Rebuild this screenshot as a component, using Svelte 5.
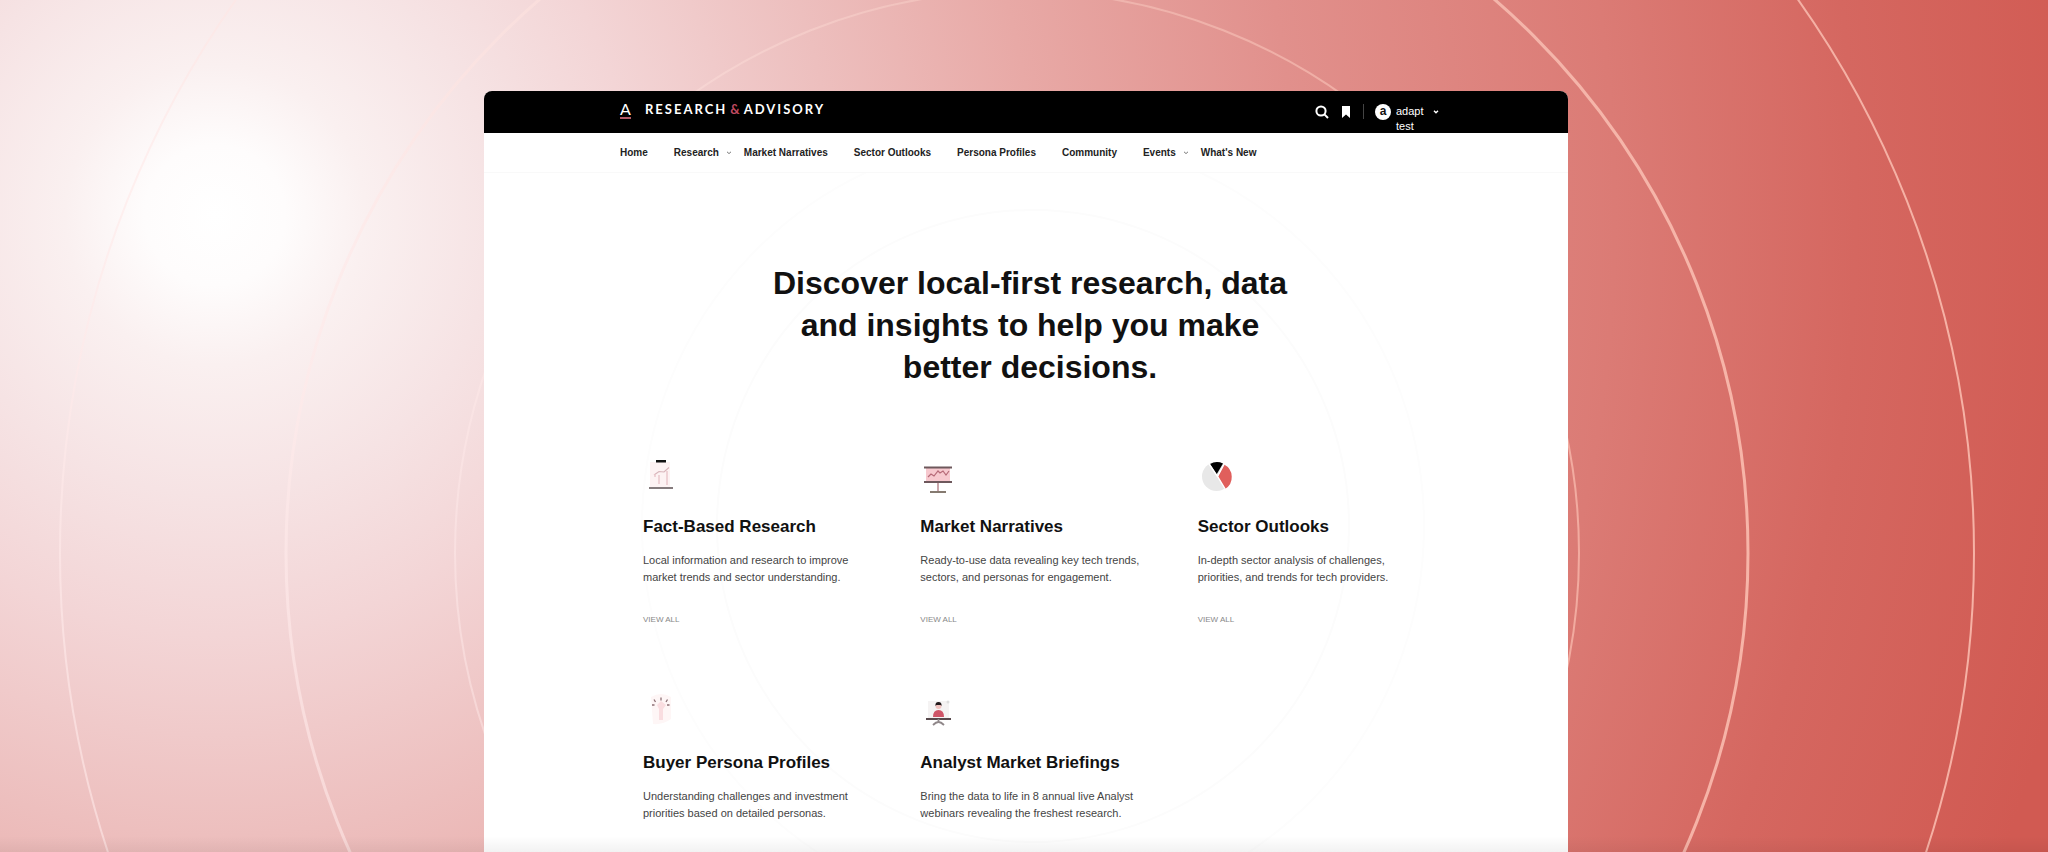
<script lang="ts">
	type NavItem = { label: string; menu?: boolean };
	type Feature = { icon: string; title: string; lines: string[]; link?: string };

	const navItems: NavItem[] = [
		{ label: 'Home' },
		{ label: 'Research', menu: true },
		{ label: 'Market Narratives' },
		{ label: 'Sector Outlooks' },
		{ label: 'Persona Profiles' },
		{ label: 'Community' },
		{ label: 'Events', menu: true },
		{ label: "What's New" }
	];

	const features: Feature[] = [
		{
			icon: 'report',
			title: 'Fact-Based Research',
			lines: ['Local information and research to improve', 'market trends and sector understanding.'],
			link: 'VIEW ALL'
		},
		{
			icon: 'board',
			title: 'Market Narratives',
			lines: ['Ready-to-use data revealing key tech trends,', 'sectors, and personas for engagement.'],
			link: 'VIEW ALL'
		},
		{
			icon: 'pie',
			title: 'Sector Outlooks',
			lines: ['In-depth sector analysis of challenges,', 'priorities, and trends for tech providers.'],
			link: 'VIEW ALL'
		},
		{
			icon: 'persona',
			title: 'Buyer Persona Profiles',
			lines: ['Understanding challenges and investment', 'priorities based on detailed personas.']
		},
		{
			icon: 'analyst',
			title: 'Analyst Market Briefings',
			lines: ['Bring the data to life in 8 annual live Analyst', 'webinars revealing the freshest research.']
		}
	];
</script>

<div class="stage">
	<svg class="rings" viewBox="0 0 2048 852" preserveAspectRatio="xMidYMid slice" aria-hidden="true">
		<defs>
			<linearGradient id="ring" x1="0" y1="0" x2="1" y2="0">
				<stop offset="0" stop-color="#ffeaea" stop-opacity="0.6" />
				<stop offset="0.5" stop-color="#fbd3c8" stop-opacity="0.5" />
				<stop offset="1" stop-color="#ffc6b8" stop-opacity="0.8" />
			</linearGradient>
		</defs>
		<g fill="none" stroke="url(#ring)">
			<circle cx="1017" cy="553" r="957" stroke-width="2" />
			<circle cx="1017" cy="553" r="731" stroke-width="3" />
			<circle cx="1017" cy="553" r="562" stroke-width="2" stroke-opacity="0.8" />
		</g>
	</svg>

	<div class="window">
		<header class="topbar">
			<a class="brand" href="#home">
				<span class="mark">A</span>
				<span class="wordmark">RESEARCH<em>&amp;</em>ADVISORY</span>
			</a>
			<div class="tools">
				<button type="button" class="tool" aria-label="Search">
					<svg width="14" height="14" viewBox="0 0 14 14" fill="none" stroke="#fff" stroke-width="2">
						<circle cx="6" cy="6" r="4.6" />
						<path d="M9.4 9.4 13 13" />
					</svg>
				</button>
				<button type="button" class="tool" aria-label="Bookmarks">
					<svg width="10" height="12" viewBox="0 0 10 12"><path d="M1 0h8v12L5 8.6 1 12z" fill="#fff" /></svg>
				</button>
				<span class="divider"></span>
				<button type="button" class="account">
					<span class="avatar">a</span>
					<span class="user">adapt<br />test</span>
					<svg width="6" height="4" viewBox="0 0 6 4" fill="none" stroke="#fff" stroke-width="1.4"><path d="M1 .8 3 2.8 5 .8" /></svg>
				</button>
			</div>
		</header>

		<nav class="nav">
			{#each navItems as item}
				<a href="#nav" class:has-menu={item.menu}>
					{item.label}
					{#if item.menu}
						<svg width="6" height="4" viewBox="0 0 6 4" fill="none" stroke="#777"><path d="M1 .8 3 2.6 5 .8" /></svg>
					{/if}
				</a>
			{/each}
		</nav>

		<main>
			<svg class="halo" viewBox="0 0 800 680" aria-hidden="true">
				<g fill="none" stroke="#fcfcfc" stroke-width="2">
					<circle cx="400" cy="353" r="316" />
					<circle cx="400" cy="353" r="391" stroke="#fdfdfd" />
				</g>
			</svg>

			<h1>Discover local-first research, data<br />and insights to help you make<br />better decisions.</h1>

			<div class="features">
				{#each features as feature}
					<article>
						<svg class="icon" width="40" height="40" viewBox="0 0 40 40" fill="none" aria-hidden="true">
							{#if feature.icon === 'report'}
								<path d="M7 7h20v26H7z" fill="#fdf2f3" />
								<path d="M13 5h10v2.500H13z" fill="#111" />
								<path d="M11 20l5-3.500 5 .5 5-4.500" stroke="#d8b4ba" stroke-width="1.200" />
								<path d="M16 20v9M24 16v14M12 19v3" stroke="#eac8cd" stroke-width="1.500" />
								<path d="M6 33h24" stroke="#857b7d" stroke-width="2" />
							{:else if feature.icon === 'board'}
								<path d="M6 12h24v14H6z" fill="#f7c9cf" />
								<path d="M8 22l3-3 3 2 4-5 2 2 3-2 3 4 3-4" stroke="#b66a78" stroke-width="1.200" />
								<path d="M4 12.500h28M4 27h28" stroke="#6e585c" stroke-width="2" />
								<path d="M18 28v9" stroke="#b9898f" stroke-width="1.500" />
								<path d="M10 37h16" stroke="#857a70" stroke-width="2" />
							{:else if feature.icon === 'pie'}
								<circle cx="18.500" cy="21.500" r="14.500" fill="#e8e8e8" />
								<path d="M18.500 19.500 12 9a14 14 0 0 1 13-.5z" fill="#000" />
								<path d="M20 21.500 26 9.500a14 14 0 0 1 1 24.500z" fill="#e05f5c" />
								<path d="M10.800 8.500 19.500 21.500l8 13M19.500 21.500 26.500 8.500" stroke="#fff" stroke-width="1.400" />
							{:else if feature.icon === 'persona'}
								<path d="M8 6q10-6 20 0v22q-8 6-18 5z" fill="#fef6f6" />
								<path d="M14 14l4-4 5 4-3 4v11h-4v-11z" fill="#f9dde0" />
								<path d="M9 14h2.500M24 14h2.500M11 8.500l1.500 2.500M18 6.500v3M24.500 8.500l-1.500 2.500" stroke="#8d7075" stroke-width="1.300" />
							{:else}
								<path d="M8 10h21v17H8z" fill="#f5f3f3" />
								<circle cx="28" cy="11" r="1.500" fill="#dedede" />
								<circle cx="18.500" cy="15" r="3" fill="#f2c3c0" />
								<path d="M15.500 15q-.5-4 3-4t3 4l-1-1h-4z" fill="#221a1c" />
								<path d="M13 26q0-7 5.500-7t5.500 7z" fill="#cf5568" />
								<path d="M6 28h25" stroke="#57494c" stroke-width="2" />
								<path d="M18.500 28v3M13 34q3-3 5.500-3t5.500 3" stroke="#8f8789" stroke-width="1.800" />
							{/if}
						</svg>
						<h2>{feature.title}</h2>
						<p>{feature.lines[0]}<br />{feature.lines[1]}</p>
						{#if feature.link}
							<a class="more" href="#all">{feature.link}</a>
						{/if}
					</article>
				{/each}
			</div>
		</main>
	</div>
	<div class="fade"></div>
</div>

<style>
	:global(body) {
		margin: 0;
	}

	.stage {
		position: relative;
		display: flex;
		justify-content: center;
		box-sizing: border-box;
		min-height: 100vh;
		padding: 91px 0 0 4px;
		overflow: hidden;
		font-family: 'Liberation Sans', Arial, sans-serif;
		color: #111;
		background: radial-gradient(
			circle at 215px 215px,
			#fff 0,
			#fefcfc 70px,
			#faf0f0 150px,
			#f6e3e4 280px,
			#f3d5d6 420px,
			#edbfbe 620px,
			#e8a9a6 820px,
			#e1908c 1080px,
			#db7b75 1400px,
			#d56760 1640px,
			#d15a52 1900px
		);
	}

	.rings {
		position: absolute;
		inset: 0;
		width: 100%;
		height: 100%;
	}

	.window {
		position: relative;
		width: 100%;
		max-width: 1084px;
		background: #fff;
		border-radius: 8px 8px 0 0;
		overflow: hidden;
	}

	.topbar {
		display: flex;
		justify-content: space-between;
		height: 42px;
		padding: 0 129px 0 136px;
		background: #000;
		box-sizing: border-box;
		overflow: hidden;
	}

	.brand {
		display: flex;
		align-items: flex-start;
		gap: 14px;
		padding-top: 9px;
		color: #fff;
		text-decoration: none;
		font-family: Lato, sans-serif;
	}

	.mark {
		width: 11px;
		border-bottom: 2px solid #b25a68;
		font-size: 16px;
		line-height: 17px;
		text-align: center;
	}

	.wordmark {
		font-size: 13px;
		font-weight: 700;
		line-height: 18px;
		letter-spacing: 2px;
	}

	.wordmark em {
		margin: 0 2px 0 3px;
		color: #c04a60;
		font-style: normal;
	}

	.tools {
		display: flex;
		align-items: flex-start;
		padding-top: 13px;
	}

	button {
		display: flex;
		padding: 0;
		border: 0;
		background: none;
		color: #fff;
		font: inherit;
		cursor: pointer;
	}

	.tool {
		align-items: center;
		height: 16px;
		margin-right: 12px;
	}

	.divider {
		width: 1px;
		height: 15px;
		margin-right: 11px;
		background: #444;
	}

	.account {
		align-items: flex-start;
		gap: 5px;
	}

	.account svg {
		margin: 6px 0 0 4px;
	}

	.avatar {
		width: 16px;
		height: 16px;
		border-radius: 50%;
		background: #fff;
		color: #111;
		font-size: 12px;
		font-weight: 700;
		line-height: 15px;
		text-align: center;
	}

	.user {
		width: 28px;
		font-size: 11px;
		line-height: 15px;
		text-align: left;
	}

	.nav {
		display: flex;
		height: 39px;
		padding: 0 136px;
		border-bottom: 1px solid #f9f9f9;
	}

	.nav a {
		display: flex;
		align-items: center;
		gap: 7px;
		padding-right: 26px;
		color: #222;
		font-size: 10px;
		font-weight: 700;
		text-decoration: none;
		white-space: nowrap;
	}

	.nav .has-menu {
		padding-right: 12px;
	}

	main {
		position: relative;
		padding: 89px 93px 0 159px;
	}

	.halo {
		position: absolute;
		top: 0;
		left: 149px;
		width: 800px;
	}

	h1 {
		position: relative;
		margin: 0 58px 67px 0;
		font-size: 32px;
		line-height: 42px;
		text-align: center;
	}

	.features {
		position: relative;
		display: grid;
		grid-template-columns: repeat(3, 1fr);
		row-gap: 65px;
	}

	.icon {
		display: block;
	}

	h2 {
		margin: 20px 0 13px;
		font-size: 17px;
		line-height: 24px;
	}

	p {
		margin: 0;
		color: #444;
		font-size: 11px;
		line-height: 17px;
	}

	.more {
		display: block;
		margin-top: 28px;
		color: #888;
		font-size: 8px;
		line-height: 12px;
		text-decoration: none;
	}

	.fade {
		position: absolute;
		right: 0;
		bottom: 0;
		left: 0;
		height: 16px;
		background: linear-gradient(rgba(0, 0, 0, 0), rgba(0, 0, 0, 0.05));
	}
</style>
